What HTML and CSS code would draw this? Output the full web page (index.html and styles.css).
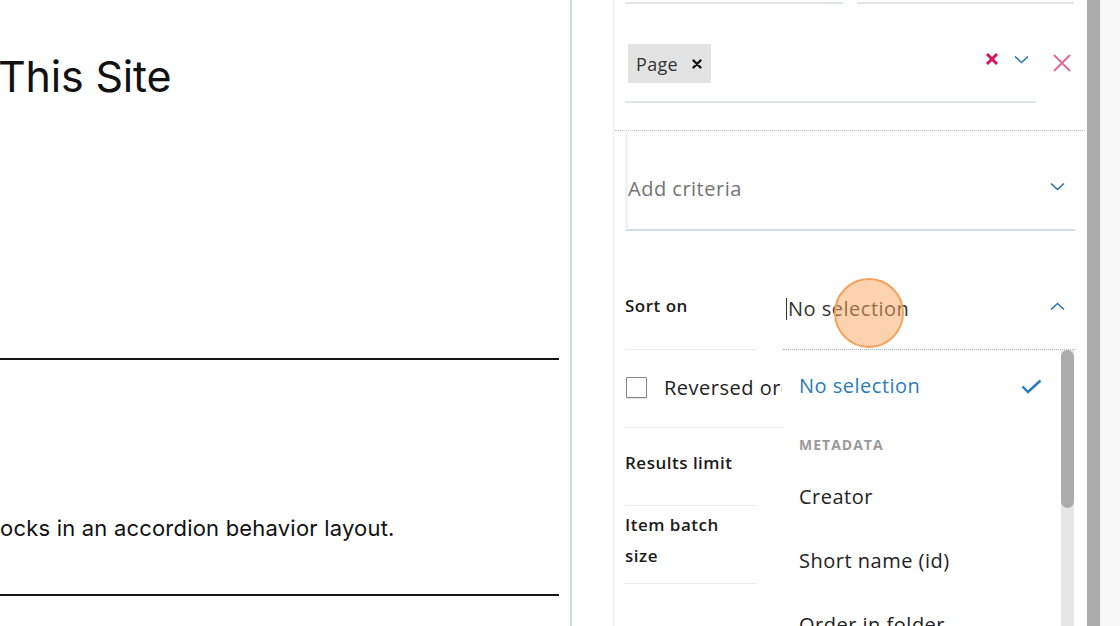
FILE: index.html
```html
<!DOCTYPE html>
<html lang="en">
<head>
<meta charset="utf-8">
<title>Listing block settings</title>
<link rel="stylesheet" href="styles.css">
</head>
<body>
<div class="page">
  <main class="main">
    <h1 class="title">This Site</h1>
    <hr class="rule rule-1">
    <p class="desc">ocks in an accordion behavior layout.</p>
    <hr class="rule rule-2">
  </main>

  <aside class="sidebar">
    <div class="panel">
      <div class="top-lines"><span class="line-a"></span><span class="line-b"></span></div>

      <div class="type-row">
        <div class="type-field">
          <span class="chip">Page
            <svg class="chip-x" width="10" height="10" viewBox="0 0 10 10"><path d="M1.5 1.5 L8.5 8.5 M8.5 1.5 L1.5 8.5" stroke="#111" stroke-width="2.4" stroke-linecap="round"/></svg>
          </span>
          <span class="field-icons">
            <svg width="14" height="14" viewBox="0 0 14 14"><path d="M2 2 L12 12 M12 2 L2 12" stroke="#d4145c" stroke-width="3"/></svg>
            <svg width="15" height="9" viewBox="0 0 15 9"><path d="M1 1.5 L7.5 7.5 L14 1.5" fill="none" stroke="#2a74ab" stroke-width="1.6"/></svg>
          </span>
        </div>
        <svg class="remove" width="20" height="20" viewBox="0 0 20 20"><path d="M2 2 L18 18 M18 2 L2 18" stroke="#e16690" stroke-width="1.8"/></svg>
      </div>

      <div class="criteria">
        <div class="criteria-field">
          <span class="placeholder">Add criteria</span>
          <svg class="chev" width="15" height="9" viewBox="0 0 15 9"><path d="M1 1.5 L7.5 7.5 L14 1.5" fill="none" stroke="#2a74ab" stroke-width="1.6"/></svg>
        </div>
      </div>

      <div class="form-row sort-row">
        <div class="label">Sort on</div>
        <div class="select">
          <span class="caret"></span>
          <span class="select-value">No selection</span>
          <svg class="chev-up" width="15" height="9" viewBox="0 0 15 9"><path d="M1 7.5 L7.5 1.5 L14 7.5" fill="none" stroke="#2a74ab" stroke-width="1.6"/></svg>
          <span class="click-ring"></span>
          <div class="menu">
            <div class="opt selected">No selection
              <svg width="21" height="15" viewBox="0 0 21 15"><path d="M1.5 7.5 L7 13 L19.5 1.5" fill="none" stroke="#2a7ab3" stroke-width="2.4"/></svg>
            </div>
            <div class="group">METADATA</div>
            <div class="opt">Creator</div>
            <div class="opt">Short name (id)</div>
            <div class="opt">Order in folder</div>
            <div class="menu-track"><div class="menu-thumb"></div></div>
          </div>
        </div>
      </div>

      <div class="check-row">
        <span class="checkbox"></span>
        <span class="check-label">Reversed order</span>
      </div>

      <div class="form-row">
        <div class="label label-results">Results limit</div>
      </div>

      <div class="form-row">
        <div class="label label-batch"><span class="wrap">Item batch size</span></div>
      </div>
    </div>
  </aside>

  <div class="scroll">
    <div class="scroll-bar"></div>
    <div class="scroll-rest"></div>
  </div>
</div>
</body>
</html>
```

FILE: styles.css
```css
* { box-sizing: border-box; margin: 0; padding: 0; }
html, body { width: 1120px; height: 626px; overflow: hidden; }
body { font-family: "Open Sans", "Noto Sans", sans-serif; background: #fff; color: #222; }

.page { display: flex; height: 626px; }

/* left content */
.main { width: 570px; flex: none; display: flex; flex-direction: column; font-family: Inter, "Liberation Sans", sans-serif; color: #111; }
.title { font-size: 43px; font-weight: 400; line-height: 54px; margin: 49px 0 0 -2px; letter-spacing: -0.2px; }
.rule { border: none; height: 2px; background: #151515; width: 559px; }
.rule-1 { margin-top: 255px; }
.desc { font-size: 22px; line-height: 30px; margin-top: 153px; letter-spacing: 0.2px; }
.rule-2 { margin-top: 51px; }

/* sidebar */
.sidebar { width: 517px; flex: none; border-left: 2px solid #c7dee7; padding-left: 41px; display: flex; }
.panel { flex: 1; border-left: 1px solid #eef0f1; padding: 0 12px 0 11px; display: flex; flex-direction: column; }

.top-lines { display: flex; gap: 14px; height: 4px; }
.top-lines span { border-bottom: 2px solid #dfe5e8; }
.line-a { width: 218px; }
.line-b { width: 217px; }

.type-row { display: flex; }
.type-field { width: 411px; display: flex; align-items: center; padding: 40px 8px 18px 3px; border-bottom: 2px solid #dfe5e8; }
.chip { height: 39px; display: flex; align-items: center; gap: 14px; padding: 0 9px 0 8px; background: #e3e3e3; font-size: 18px; color: #333; letter-spacing: 0.3px; }
.field-icons { margin-left: auto; display: flex; align-items: center; gap: 15px; margin-bottom: 9px; margin-right: -1px; }
.remove { margin: 49px 0 0 16px; }

.criteria { margin: 27px -10px 0; padding: 0 10px; border-top: 1px dotted #bfbfbf; }
.criteria-field { margin-top: 2px; display: flex; align-items: center; padding: 44px 10px 28px 0; border-left: 3px solid #edf4f9; border-bottom: 2px solid #cfdde2; }
.placeholder { font-size: 20px; line-height: 24px; color: #737373; letter-spacing: 0.5px; }
.chev { margin-left: auto; margin-bottom: 6px; }

.form-row { display: flex; gap: 26px; }
.label { width: 132px; height: 78px; padding-top: 23px; line-height: 24px; font-size: 17px; font-weight: 600; color: #1b1b1b; border-bottom: 1px solid #e8ecee; letter-spacing: 0.5px; }
.sort-row .label { height: 119px; padding-top: 63px; }
.label-batch { padding-top: 3px; line-height: 31px; }
.label-batch .wrap { display: block; width: 108px; }

.select { flex: 1; position: relative; display: flex; align-items: flex-start; padding: 66px 10px 0 3px; border-bottom: 1px dotted #b0b0b0; font-size: 20px; line-height: 24px; color: #333; letter-spacing: 0.5px; }
.caret { width: 1px; height: 22px; background: #333; margin: 1px 1px 0 0; }
.chev-up { margin: 5px 0 0 auto; }
.click-ring { position: absolute; left: 51px; top: 47px; width: 70px; height: 70px; border-radius: 50%; background: rgba(251, 166, 96, 0.5); border: 2px solid #f4a25e; z-index: 2; }

.menu { position: absolute; top: 100%; left: 0; width: 292px; height: 300px; margin-top: 1px; background: #fff; z-index: 3; overflow: hidden; }
.opt { height: 64px; display: flex; align-items: center; padding-left: 16px; font-size: 20px; color: #222; letter-spacing: 0.5px; }
.opt.selected { margin-top: 4px; color: #2b7cb3; justify-content: space-between; padding-right: 33px; }
.group { padding: 18px 0 11px 16px; line-height: 18px; font-size: 14px; font-weight: 700; color: #9a9a9a; letter-spacing: 1px; }
.menu-track { position: absolute; top: 0; bottom: 0; right: 1px; width: 13px; background: #e6e6e6; }
.menu-thumb { height: 158px; background: #ababab; border-radius: 7px; }

.check-row { height: 78px; display: flex; align-items: center; padding: 0 0 3px 1px; border-bottom: 1px solid #e8ecee; }
.checkbox { width: 21px; height: 21px; border: 1.5px solid #8c8285; border-radius: 1px; box-shadow: 0 1px 1px rgba(0,0,0,0.12); }
.check-label { margin-left: 17px; width: 118px; overflow: hidden; font-size: 20px; color: #222; letter-spacing: 0.5px; white-space: nowrap; }

/* window scrollbar */
.scroll { flex: 1; display: flex; }
.scroll-bar { width: 13px; background: #ababab; }
.scroll-rest { flex: 1; background: #f8f8f8; border-left: 1px solid #f0f0f0; }
```
